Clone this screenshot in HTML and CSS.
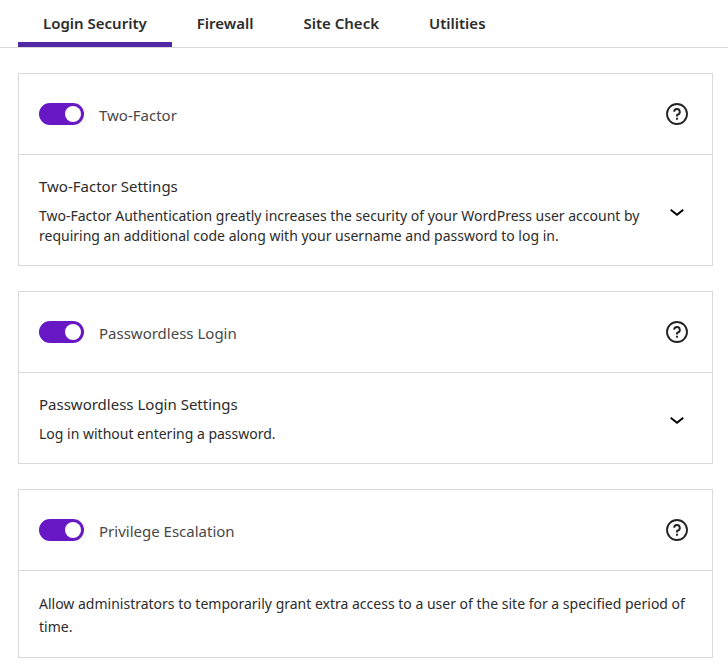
FILE: index.html
```html
<!DOCTYPE html>
<html lang="en">
<head>
<meta charset="utf-8">
<title>Login Security</title>
<link rel="stylesheet" href="styles.css">
</head>
<body>
<svg class="defs" aria-hidden="true">
  <symbol id="help" viewBox="0 0 24 24"><path d="M12 4.75a7.25 7.25 0 100 14.5 7.25 7.25 0 000-14.5zM3.250 12a8.750 8.750 0 1117.5 0 8.750 8.750 0 01-17.5 0zM12 8.750a1.500 1.500 0 01.167 2.990c-.465.052-.917.440-.917 1.010V14h1.500v-.845A3 3 0 109 10.250h1.500a1.500 1.500 0 011.500-1.500zM11.250 15v1.500h1.500V15h-1.500z"/></symbol>
  <symbol id="chevron" viewBox="0 0 24 24"><path d="M17.500 11.600L12 16l-5.500-4.400.900-1.200L12 14l4.500-3.600 1 1.200z"/></symbol>
</svg>
<nav class="tabs">
  <a class="tab active" href="#login" aria-current="page">Login Security</a>
  <a class="tab" href="#firewall">Firewall</a>
  <a class="tab" href="#site-check">Site Check</a>
  <a class="tab" href="#utilities">Utilities</a>
</nav>
<main class="cards">
  <section class="card">
    <header class="card-head">
      <input class="toggle" type="checkbox" id="two-factor" checked>
      <label class="name" for="two-factor">Two-Factor</label>
      <button class="icon-button" type="button" aria-label="Help"><svg class="help"><use href="#help"/></svg></button>
    </header>
    <div class="settings">
      <div class="copy">
        <h2>Two-Factor Settings</h2>
        <p>Two-Factor Authentication greatly increases the security of your WordPress user account by requiring an additional code along with your username and password to log in.</p>
      </div>
      <button class="icon-button" type="button" aria-label="Expand"><svg class="chevron"><use href="#chevron"/></svg></button>
    </div>
  </section>
  <section class="card">
    <header class="card-head">
      <input class="toggle" type="checkbox" id="passwordless" checked>
      <label class="name" for="passwordless">Passwordless Login</label>
      <button class="icon-button" type="button" aria-label="Help"><svg class="help"><use href="#help"/></svg></button>
    </header>
    <div class="settings">
      <div class="copy">
        <h2>Passwordless Login Settings</h2>
        <p>Log in without entering a password.</p>
      </div>
      <button class="icon-button" type="button" aria-label="Expand"><svg class="chevron"><use href="#chevron"/></svg></button>
    </div>
  </section>
  <section class="card">
    <header class="card-head">
      <input class="toggle" type="checkbox" id="privilege" checked>
      <label class="name" for="privilege">Privilege Escalation</label>
      <button class="icon-button" type="button" aria-label="Help"><svg class="help"><use href="#help"/></svg></button>
    </header>
    <p class="description">Allow administrators to temporarily grant extra access to a user of the site for a specified period of time.</p>
  </section>
</main>
</body>
</html>
```
FILE: styles.css
```css
* { box-sizing: border-box; }
body {
  margin: 0;
  background: #fff;
  color: #2c2c2c;
  font-family: "Noto Sans", "Open Sans", sans-serif;
  font-size: 14px;
}
.defs { position: absolute; width: 0; height: 0; }
.tabs {
  display: flex;
  height: 48px;
  padding: 0 18px;
  border-bottom: 1px solid #d9d9d9;
}
.tab {
  display: flex;
  padding: 0 25px;
  border-bottom: 5px solid transparent;
  color: #2c2c2c;
  font-size: 15px;
  font-weight: 600;
  line-height: 46px;
  text-decoration: none;
}
.tab.active { border-color: #5127a4; }
.cards {
  display: grid;
  gap: 25px;
  padding: 25px 15px 12px 18px;
}
.card { border: 1px solid #d9d9d9; }
.card-head {
  display: flex;
  align-items: center;
  height: 81px;
  padding: 0 20px;
  border-bottom: 1px solid #d9d9d9;
}
.toggle {
  appearance: none;
  display: flex;
  align-items: center;
  justify-content: flex-end;
  width: 45px;
  height: 22px;
  margin: 0 15px 0 0;
  padding: 3px;
  border-radius: 11px;
  background: #6817c5;
}
.toggle::before {
  content: "";
  width: 16px;
  height: 16px;
  border-radius: 50%;
  background: #fff;
}
.name { flex: 1; padding-top: 2px; color: #484848; font-size: 15px; }
.icon-button {
  display: flex;
  flex: none;
  justify-content: center;
  width: 30px;
  padding: 0;
  border: 0;
  background: none;
}
.help, .chevron { width: 30px; height: 30px; }
.help { fill: #232323; }
.settings {
  display: flex;
  align-items: center;
  gap: 12px;
  padding: 20px 20px 19px;
}
.copy { flex: 1; }
h2 { margin: 0 0 9px; font-size: 15px; font-weight: 400; line-height: 22px; }
p { margin: 0; }
.copy p { line-height: 20px; }
.description { padding: 21px 20px 19px; line-height: 23px; }
```
